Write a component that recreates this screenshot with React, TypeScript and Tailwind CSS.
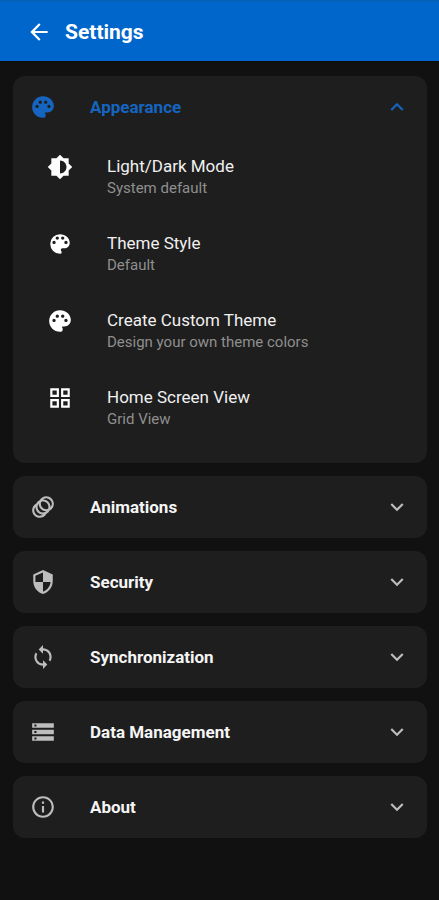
import React, { useState } from "react";
import type { IconType } from "react-icons";
import {
  MdAnimation,
  MdArrowBack,
  MdBrightness6,
  MdColorLens,
  MdExpandLess,
  MdExpandMore,
  MdGridView,
  MdInfoOutline,
  MdPalette,
  MdSecurity,
  MdStorage,
  MdSync,
} from "react-icons/md";

interface Option {
  title: string;
  value: string;
  icon: IconType;
}

interface Section {
  id: string;
  title: string;
  icon: IconType;
  options: Option[];
}

const sections: Section[] = [
  {
    id: "appearance",
    title: "Appearance",
    icon: MdPalette,
    options: [
      { title: "Light/Dark Mode", value: "System default", icon: MdBrightness6 },
      { title: "Theme Style", value: "Default", icon: MdColorLens },
      { title: "Create Custom Theme", value: "Design your own theme colors", icon: MdPalette },
      { title: "Home Screen View", value: "Grid View", icon: MdGridView },
    ],
  },
  { id: "animations", title: "Animations", icon: MdAnimation, options: [] },
  { id: "security", title: "Security", icon: MdSecurity, options: [] },
  { id: "sync", title: "Synchronization", icon: MdSync, options: [] },
  { id: "data", title: "Data Management", icon: MdStorage, options: [] },
  { id: "about", title: "About", icon: MdInfoOutline, options: [] },
];

const OptionRow: React.FC<{ option: Option }> = ({ option }) => {
  const Icon = option.icon;
  return (
    <li>
      <button type="button" className="flex w-full items-start gap-[34px] pt-4 pb-[17px] pl-[34px] pr-4 text-left">
        <Icon className="size-[26px] shrink-0 text-white" />
        <span className="flex flex-col">
          <span className="text-[17px] leading-6 text-[#f0f0f0]">{option.title}</span>
          <span className="text-[15px] leading-5 text-[#8f8f8f]">{option.value}</span>
        </span>
      </button>
    </li>
  );
};

const SectionCard: React.FC<{ section: Section; open: boolean; onToggle: () => void }> = ({
  section,
  open,
  onToggle,
}) => {
  const Icon = section.icon;
  const Chevron = open ? MdExpandLess : MdExpandMore;
  return (
    <section className="rounded-xl bg-[#1e1e1e]">
      <h2>
        <button
          type="button"
          aria-expanded={open}
          onClick={onToggle}
          className={`flex h-[62px] w-full items-center px-[17px] text-left ${open ? "text-[#1565c0]" : "text-[#bdbdbd]"}`}
        >
          <Icon className="size-[26px] shrink-0" />
          <span className={`ml-[34px] flex-1 text-[17px] leading-6 font-bold ${open ? "" : "text-[#f5f5f5]"}`}>
            {section.title}
          </span>
          <Chevron className="size-[26px] shrink-0" />
        </button>
      </h2>
      {open && section.options.length > 0 && (
        <ul className="pb-[17px]">
          {section.options.map((option) => (
            <OptionRow key={option.title} option={option} />
          ))}
        </ul>
      )}
    </section>
  );
};

const App: React.FC = () => {
  const [openId, setOpenId] = useState("appearance");

  return (
    <div className="min-h-screen bg-[#111111] font-['Roboto',sans-serif]">
      <header className="flex h-[61px] items-center gap-[13px] border-t-2 border-[#0560b8] bg-[#0066cc] pl-[26px] text-white shadow-sm">
        <button type="button" aria-label="Back">
          <MdArrowBack className="size-[26px]" />
        </button>
        <h1 className="text-[21px] leading-7 font-bold">Settings</h1>
      </header>
      <main className="flex flex-col gap-[13px] pt-[15px] pr-3 pb-[13px] pl-[13px]">
        {sections.map((section) => (
          <SectionCard
            key={section.id}
            section={section}
            open={openId === section.id}
            onToggle={() => setOpenId(openId === section.id ? "" : section.id)}
          />
        ))}
      </main>
    </div>
  );
};

export default App;
